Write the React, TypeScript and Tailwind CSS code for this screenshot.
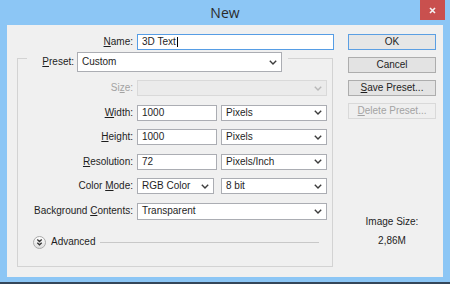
import React from "react";

function Chevron({ color = "#3c3c3c" }: { color?: string }) {
  return (
    <svg width="8" height="5" viewBox="0 0 8 5" className="shrink-0">
      <path d="M0.8 0.8 L4 4 L7.2 0.8" fill="none" stroke={color} strokeWidth="1.4" />
    </svg>
  );
}

function Select({
  value,
  w,
  h = "h-[16px]",
  disabled = false,
}: {
  value: string;
  w: string;
  h?: string;
  disabled?: boolean;
}) {
  return (
    <div
      className={`${w} ${h} shrink-0 flex items-center justify-between pl-[4px] pr-[4px] border ${
        disabled ? "border-[#d9d9d9] bg-[#ebebeb]" : "border-[#abadb3] bg-white"
      }`}
    >
      <span className="leading-none">{value}</span>
      <Chevron color={disabled ? "#b8b8b8" : "#3c3c3c"} />
    </div>
  );
}

function Input({ value, w }: { value: string; w: string }) {
  return (
    <div className={`${w} h-[16px] shrink-0 flex items-center pl-[4px] border border-[#abadb3] bg-white`}>
      <span className="leading-none">{value}</span>
    </div>
  );
}

function Label({ children, disabled = false }: { children: React.ReactNode; disabled?: boolean }) {
  return (
    <div className={`w-[119px] shrink-0 text-right pr-[4px] leading-none ${disabled ? "text-[#a3a3a3]" : ""}`}>
      {children}
    </div>
  );
}

function Btn({ children, primary = false, disabled = false }: { children: React.ReactNode; primary?: boolean; disabled?: boolean }) {
  return (
    <div
      className={`w-[88px] h-[16px] flex items-center justify-center border leading-none ${
        primary
          ? "border-[#5b9fe3] bg-[#e6e6e6]"
          : disabled
          ? "border-[#d9d9d9] bg-[#efefef] text-[#a3a3a3]"
          : "border-[#adadad] bg-[#e3e3e3]"
      }`}
    >
      {children}
    </div>
  );
}

const U = ({ children }: { children: React.ReactNode }) => (
  <span className="underline underline-offset-[1px]">{children}</span>
);

export default function App() {
  return (
    <div className="w-[450px] h-[284px] bg-[#8cc6f5] flex flex-col overflow-hidden font-['Liberation_Sans',Arial,sans-serif] text-[10px] text-[#1e1e1e]">
      {/* Title bar */}
      <div className="h-[25px] shrink-0 flex relative">
        <div className="flex-1 flex items-center justify-center text-[14px] text-[#2b2b2b] font-['Open_Sans',sans-serif] leading-none">
          New
        </div>
        <div className="absolute right-[5px] top-0 w-[25px] h-[20px] bg-[#c9504e] flex items-center justify-center">
          <svg width="7" height="7" viewBox="0 0 7 7">
            <path d="M1 1 L6 6 M6 1 L1 6" stroke="#f4f4f4" strokeWidth="1.6" />
          </svg>
        </div>
      </div>

      {/* Content */}
      <div className="ml-[7px] w-[436px] h-[252px] shrink-0 bg-[#f0f0f0] flex">
        {/* Left column */}
        <div className="w-[327px] pt-[9px] flex flex-col">
          <div className="flex items-center h-[16px]">
            <div className="w-[130px] text-right pr-[4px] leading-none">
              <U>N</U>ame:
            </div>
            <div className="w-[197px] h-[16px] flex items-center pl-[4px] border border-[#569de5] bg-white">
              <span className="leading-none">3D Text</span>
              <span className="w-[1px] h-[10px] bg-black ml-[1px]" />
            </div>
          </div>

          {/* Group box */}
          <div className="mt-[8px] ml-[10px] w-[316px] h-[209px] border border-[#d3d3d3] flex flex-col">
            <div className="mt-[-7px] ml-[9px] w-[261px] h-[20px] bg-[#f0f0f0] flex items-center pr-[6px]">
              <div className="flex-1 text-right pr-[3px] leading-none">
                <U>P</U>reset:
              </div>
              <Select value="Custom" w="w-[205px]" h="h-[20px]" />
            </div>

            <div className="mt-[8px] flex flex-col gap-[8.6px]">
              <div className="flex items-center h-[16px]">
                <Label disabled>
                  Si<U>z</U>e:
                </Label>
                <Select value="" w="w-[190px]" disabled />
              </div>
              <div className="flex items-center h-[16px]">
                <Label>
                  <U>W</U>idth:
                </Label>
                <Input value="1000" w="w-[80px]" />
                <div className="ml-[4px]">
                  <Select value="Pixels" w="w-[106px]" />
                </div>
              </div>
              <div className="flex items-center h-[16px]">
                <Label>
                  <U>H</U>eight:
                </Label>
                <Input value="1000" w="w-[80px]" />
                <div className="ml-[4px]">
                  <Select value="Pixels" w="w-[106px]" />
                </div>
              </div>
              <div className="flex items-center h-[16px]">
                <Label>
                  <U>R</U>esolution:
                </Label>
                <Input value="72" w="w-[80px]" />
                <div className="ml-[4px]">
                  <Select value="Pixels/Inch" w="w-[106px]" />
                </div>
              </div>
              <div className="flex items-center h-[16px]">
                <Label>
                  Color <U>M</U>ode:
                </Label>
                <Select value="RGB Color" w="w-[77px]" />
                <div className="ml-[7px]">
                  <Select value="8 bit" w="w-[106px]" />
                </div>
              </div>
              <div className="flex items-center h-[17px]">
                <Label>
                  Background <U>C</U>ontents:
                </Label>
                <Select value="Transparent" w="w-[190px]" h="h-[17px]" />
              </div>
            </div>

            <div className="mt-[16px] h-[13px] flex items-center">
              <div className="ml-[15px] w-[13px] h-[13px]">
                <svg width="13" height="13" viewBox="0 0 13 13">
                  <defs>
                    <linearGradient id="g" x1="0" y1="0" x2="0" y2="1">
                      <stop offset="0" stopColor="#ffffff" />
                      <stop offset="1" stopColor="#dcdcdc" />
                    </linearGradient>
                  </defs>
                  <circle cx="6.5" cy="6.5" r="6" fill="url(#g)" stroke="#a9a9a9" strokeWidth="1" />
                  <path d="M4.3 3.6 L6.5 5.6 L8.7 3.6 M4.3 6.8 L6.5 8.8 L8.7 6.8" fill="none" stroke="#333333" strokeWidth="1.3" />
                </svg>
              </div>
              <div className="ml-[5px] leading-none">Advanced</div>
              <div className="ml-[5px] w-[219px] h-[1px] bg-[#c8c8c8]" />
            </div>
          </div>
        </div>

        {/* Right column */}
        <div className="ml-[14px] w-[88px] pt-[9px] flex flex-col">
          <div className="flex flex-col gap-[7px]">
            <Btn primary>OK</Btn>
            <Btn>Cancel</Btn>
            <Btn>
              <U>S</U>ave Preset...
            </Btn>
            <Btn disabled>
              <U>D</U>elete Preset...
            </Btn>
          </div>
          <div className="mt-[97px] h-[12px] flex items-center justify-center leading-none">Image Size:</div>
          <div className="mt-[7px] h-[12px] flex items-center justify-center leading-none">2,86M</div>
        </div>
      </div>

      <div className="h-[5px] shrink-0" />
      <div className="flex-1 bg-[#34465a]" />
    </div>
  );
}
